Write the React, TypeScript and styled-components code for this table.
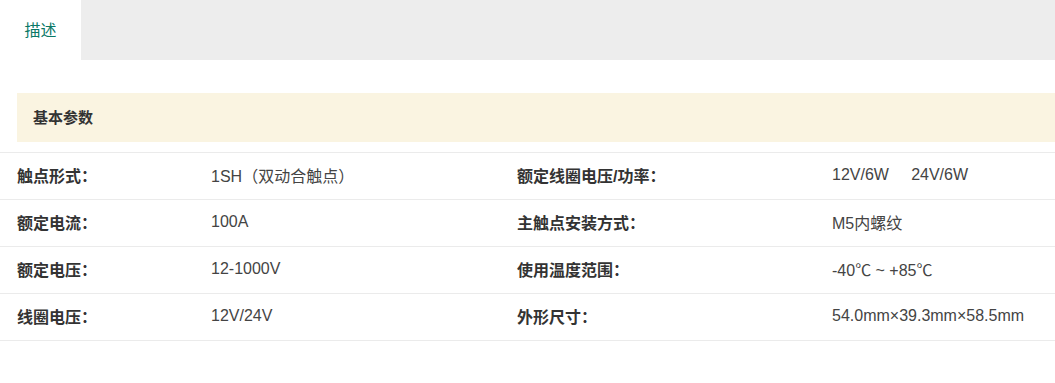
import React from 'react';
import styled, { createGlobalStyle } from 'styled-components';

const GlobalStyle = createGlobalStyle`
  body {
    margin: 0;
    background: #fff;
    font-family: "Liberation Sans", Arial, "Noto Sans CJK SC", sans-serif;
    color: #333;
  }
`;

const Page = styled.div`
  width: 1055px;
`;

const TabBar = styled.div`
  display: flex;
  height: 60px;
  background: #ededed;
`;

const Tab = styled.div<{ $active?: boolean }>`
  width: 81px;
  padding-bottom: 2px;
  box-sizing: border-box;
  display: flex;
  align-items: center;
  justify-content: center;
  font-size: 16px;
  color: ${(p) => (p.$active ? '#0a7866' : '#555')};
  background: ${(p) => (p.$active ? '#fff' : 'transparent')};
`;

const Section = styled.div`
  padding-top: 33px;
`;

const SectionTitle = styled.div`
  margin-left: 17px;
  height: 49px;
  padding: 0 0 2px 16px;
  box-sizing: border-box;
  display: flex;
  align-items: center;
  background: #faf4e1;
  font-size: 15px;
  font-weight: bold;
  color: #333;
`;

const Table = styled.div`
  margin-top: 10px;
  display: grid;
  grid-template-columns: 194px 306px 315px 1fr;
  border-bottom: 1px solid #ebebeb;
`;

const Cell = styled.div<{ $label?: boolean }>`
  height: 47px;
  box-sizing: border-box;
  border-top: 1px solid #ebebeb;
  padding: 0 0 2px 17px;
  display: flex;
  align-items: center;
  font-size: 16px;
  font-weight: ${(p) => (p.$label ? 'bold' : 'normal')};
  color: ${(p) => (p.$label ? '#333' : '#444')};
  white-space: pre;
`;

const rows: [string, string, string, string][] = [
  ['触点形式：', '1SH（双动合触点）', '额定线圈电压/功率：', '12V/6W\u00a0\u00a0\u00a0\u00a0\u00a024V/6W'],
  ['额定电流：', '100A', '主触点安装方式：', 'M5内螺纹'],
  ['额定电压：', '12-1000V', '使用温度范围：', '-40℃ ~ +85℃'],
  ['线圈电压：', '12V/24V', '外形尺寸：', '54.0mm×39.3mm×58.5mm'],
];

const App = () => {
  return (
    <Page>
      <GlobalStyle />
      <TabBar>
        <Tab $active>描述</Tab>
      </TabBar>
      <Section>
        <SectionTitle>基本参数</SectionTitle>
        <Table>
          {rows.map((r, i) => (
            <React.Fragment key={i}>
              <Cell $label>{r[0]}</Cell>
              <Cell>{r[1]}</Cell>
              <Cell $label>{r[2]}</Cell>
              <Cell>{r[3]}</Cell>
            </React.Fragment>
          ))}
        </Table>
      </Section>
    </Page>
  );
};

export default App;
